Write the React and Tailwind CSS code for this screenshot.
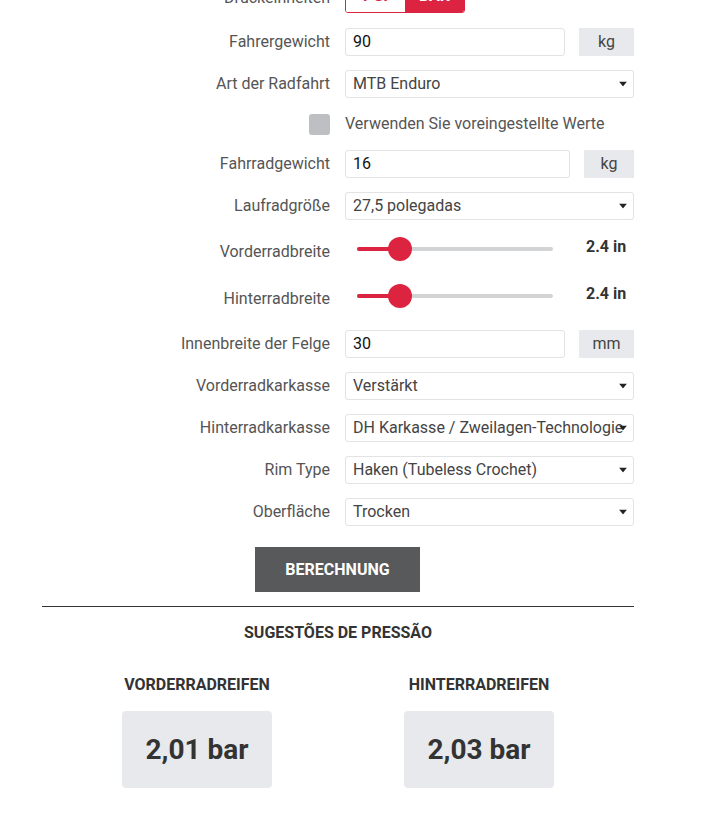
import React from 'react'

function Caret() {
    return (
        <svg className="absolute right-[6px] top-1/2 -translate-y-1/2" width="8" height="5" viewBox="0 0 8 5">
            <path d="M0 0 L8 0 L4 5 Z" fill="#222" />
        </svg>
    )
}

function Row({ label, className, labelClass = '', children }) {
    return (
        <div className={'flex items-center ' + className}>
            <div className={'w-[288px] shrink-0 text-right text-[16px] leading-[20px] text-[#555] ' + labelClass}>{label}</div>
            <div className="ml-[15px] w-[289px]">{children}</div>
        </div>
    )
}

function Select({ value }) {
    return (
        <div className="relative flex h-[28px] items-center rounded-[3px] border border-[#e3e3e3] bg-white pl-[7px] pr-[8px]">
            <span className="overflow-hidden whitespace-nowrap text-[16px] text-[#444]">{value}</span>
            <Caret />
        </div>
    )
}

function UnitInput({ value, unit, inputW, unitW }) {
    return (
        <div className="flex justify-between">
            <div className={'flex h-[28px] items-center rounded-[3px] border border-[#e3e3e3] pl-[7px] text-[16px] text-[#111] ' + inputW}>{value}</div>
            <div className={'flex h-[28px] items-center justify-center bg-[#e8e9ec] text-[16px] text-[#444] ' + unitW}>{unit}</div>
        </div>
    )
}

function Slider({ value }) {
    return (
        <div className="flex items-center">
            <div className="relative ml-[12px] h-[4px] w-[196px] rounded-full bg-[#d2d3d5]">
                <div className="h-[4px] w-[43px] rounded-full bg-[#dc2440]" />
                <div className="absolute left-[31px] top-1/2 h-[24px] w-[24px] -translate-y-1/2 rounded-full bg-[#dc2440]" />
            </div>
            <div className="ml-[33px] -mt-[5px] text-[16px] font-bold text-[#333]">{value}</div>
        </div>
    )
}

function Result({ title, value }) {
    return (
        <div className="flex w-[150px] flex-col items-center">
            <div className="whitespace-nowrap text-[16px] font-bold leading-[18px] text-[#333]">{title}</div>
            <div className="mt-[17px] flex h-[77px] w-[150px] items-center justify-center rounded-[4px] bg-[#e8e9ec] text-[28px] font-bold text-[#333]">{value}</div>
        </div>
    )
}

export default function App() {
    return (
        <div className="h-[817px] w-[711px] overflow-hidden bg-white font-['Roboto',sans-serif]">
            <div className="ml-[42px] -mt-[21px] w-[592px]">
                <Row label="Druckeinheiten" labelClass="mt-[4px]" className="">
                    <div className="flex h-[34px] w-[120px] overflow-hidden rounded-[3px] border border-[#dc2440] text-[16px] font-bold">
                        <div className="flex w-1/2 items-center justify-center bg-white text-[#dc2440]">PSI</div>
                        <div className="flex w-1/2 items-center justify-center bg-[#dc2440] text-white">BAR</div>
                    </div>
                </Row>
                <Row label="Fahrergewicht" className="mt-[15px]">
                    <UnitInput value="90" unit="kg" inputW="w-[220px]" unitW="w-[55px]" />
                </Row>
                <Row label="Art der Radfahrt" className="mt-[14px]">
                    <Select value="MTB Enduro" />
                </Row>
                <div className="mt-[12px] flex h-[28px] items-center">
                    <div className="flex w-[288px] shrink-0 justify-end">
                        <div className="h-[21px] w-[21px] rounded-[3px] bg-[#bdbfc3]" />
                    </div>
                    <div className="ml-[15px] text-[16px] text-[#555]">Verwenden Sie voreingestellte Werte</div>
                </div>
                <Row label="Fahrradgewicht" className="mt-[12px]">
                    <UnitInput value="16" unit="kg" inputW="w-[225px]" unitW="w-[50px]" />
                </Row>
                <Row label="Laufradgröße" className="mt-[14px]">
                    <Select value="27,5 polegadas" />
                </Row>
                <Row label="Vorderradbreite" labelClass="mt-[5px]" className="mt-[12px] h-[34px]">
                    <Slider value="2.4 in" />
                </Row>
                <Row label="Hinterradbreite" labelClass="mt-[5px]" className="mt-[13px] h-[34px]">
                    <Slider value="2.4 in" />
                </Row>
                <Row label="Innenbreite der Felge" className="mt-[17px]">
                    <UnitInput value="30" unit="mm" inputW="w-[220px]" unitW="w-[55px]" />
                </Row>
                <Row label="Vorderradkarkasse" className="mt-[14px]">
                    <Select value="Verstärkt" />
                </Row>
                <Row label="Hinterradkarkasse" className="mt-[14px]">
                    <Select value="DH Karkasse / Zweilagen-Technologie" />
                </Row>
                <Row label="Rim Type" className="mt-[14px]">
                    <Select value="Haken (Tubeless Crochet)" />
                </Row>
                <Row label="Oberfläche" className="mt-[14px]">
                    <Select value="Trocken" />
                </Row>
                <div className="mt-[21px] flex">
                    <button className="ml-[213px] h-[45px] w-[165px] bg-[#58595b] text-[16px] font-bold uppercase text-white">Berechnung</button>
                </div>
                <div className="mt-[14px] h-px bg-[#333]" />
                <div className="mt-[17px] text-center text-[16px] font-bold leading-[18px] text-[#333]">SUGESTÕES DE PRESSÃO</div>
                <div className="mt-[34px] flex justify-center gap-[132px]">
                    <Result title="VORDERRADREIFEN" value="2,01 bar" />
                    <Result title="HINTERRADREIFEN" value="2,03 bar" />
                </div>
            </div>
        </div>
    )
}
